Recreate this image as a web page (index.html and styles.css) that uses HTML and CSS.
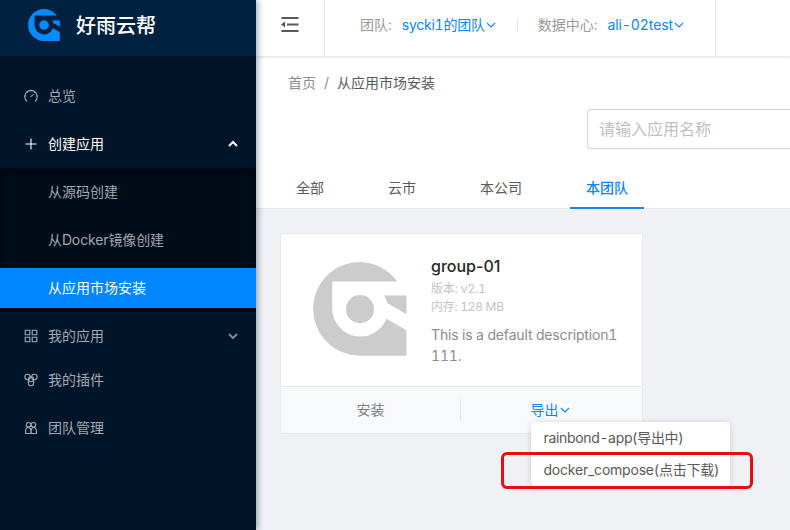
FILE: index.html
```
<!DOCTYPE html>
<html lang="zh-CN">
<head>
<meta charset="utf-8">
<title>从应用市场安装</title>
<link rel="stylesheet" href="styles.css">
</head>
<body>
<svg class="defs" width="0" height="0">
  <symbol id="logo" viewBox="130 110 280 281">
    <path d="M381 168A140 140 0 0 0 270 110A140 140 0 0 0 270 390H409V314L349 280A84 84 0 0 1 187 250V168ZM342 210H409V266L352 233Q349 221 342 210Z"/>
    <circle cx="270" cy="251" r="42"/>
  </symbol>
  <symbol id="chevron" viewBox="0 0 10 10"><path d="M1 3l4 4 4-4"/></symbol>
</svg>
<div class="layout">
  <aside class="sider">
    <div class="brand"><svg class="brand-logo"><use href="#logo"/></svg><h1>好雨云帮</h1></div>
    <nav class="menu">
      <a class="item">
        <svg class="icon" viewBox="0 0 14 14"><path d="M3 12.5A6.3 6.3 0 1 1 11 12.5M6.6 7.8L9.4 5.4M7 1v1.5M1 7h1.4M11.6 7H13M2.8 2.9l1 1M11.2 2.9l-1 1"/></svg>
        <span>总览</span></a>
      <a class="item open">
        <svg class="icon" viewBox="0 0 14 14"><path d="M7 1.5v11M1.5 7h11"/></svg>
        <span>创建应用</span><svg class="arrow up"><use href="#chevron"/></svg></a>
      <div class="submenu">
        <a class="item">从源码创建</a>
        <a class="item docker">从Docker镜像创建</a>
        <a class="item selected">从应用市场安装</a>
      </div>
      <a class="item">
        <svg class="icon" viewBox="0 0 14 14"><path d="M1.2 1.2h4.6v4.6H1.2zM8.2 1.2h4.6v4.6H8.2zM1.2 8.2h4.6v4.6H1.2zM8.2 8.2h4.6v4.6H8.2z"/></svg>
        <span>我的应用</span><svg class="arrow"><use href="#chevron"/></svg></a>
      <a class="item tight">
        <svg class="icon" viewBox="0 0 14 14"><circle cx="3.6" cy="4" r="2.7"/><circle cx="10.4" cy="4" r="2.7"/><circle cx="7" cy="6.3" r="2.5"/><path d="M4.4 6.5v3.7a2.6 2.6 0 0 0 5.2 0V6.5"/></svg>
        <span>我的插件</span></a>
      <a class="item">
        <svg class="icon" viewBox="0 0 14 14"><circle cx="4.6" cy="3.8" r="2.3"/><circle cx="9.4" cy="3.8" r="2.3"/><path d="M4.3 6.2C2.2 6.7 1.5 8.5 1.5 10v2.5h5.3V9.8C6.8 8 6 6.6 4.3 6.2M9.5 6.2c2.1.5 3 2.3 3 3.8v2.5H7.2V9.8C7.2 8 8 6.6 9.5 6.2"/></svg>
        <span>团队管理</span></a>
    </nav>
  </aside>
  <main class="main">
    <header class="topbar">
      <div class="trigger"><svg width="20" height="18" viewBox="0 0 20 18"><path d="M1.500 2h17M7 8.500h11.500M1.500 15h17" fill="none" stroke="currentColor" stroke-width="1.800"/><path d="M1 8.500L5 5.500v6z" fill="currentColor"/></svg></div>
      <div class="selectors">
        <span class="label">团队:</span><a class="link team">sycki1的团队<svg class="down"><use href="#chevron"/></svg></a>
        <i class="sep"></i>
        <span class="label">数据中心:</span><a class="link center">ali-02test<svg class="down"><use href="#chevron"/></svg></a>
      </div>
    </header>
    <section class="page-head">
      <div class="crumbs"><span>首页</span><i>/</i><b>从应用市场安装</b></div>
      <div class="search">请输入应用名称</div>
      <div class="tabs"><a>全部</a><a>云市</a><a>本公司</a><a class="active">本团队</a></div>
    </section>
    <section class="content">
      <article class="card">
        <div class="card-body">
          <svg class="card-logo"><use href="#logo"/></svg>
          <div class="meta">
            <h2>group-01</h2>
            <p class="small">版本: v2.1</p>
            <p class="small">内存: 128 MB</p>
            <p class="desc">This is a default description1<br>111.</p>
          </div>
        </div>
        <div class="actions">
          <a>安装</a>
          <a class="link export">导出<svg class="down"><use href="#chevron"/></svg></a>
        </div>
        <div class="dropdown"><a class="pending">rainbond-app(导出中)</a><a>docker_compose(点击下载)</a></div>
        <div class="highlight"></div>
      </article>
    </section>
  </main>
</div>
</body>
</html>
```
FILE: styles.css
```
* { box-sizing: border-box; }
body { margin: 0; font: 14px/22px Inter, "Noto Sans CJK SC", sans-serif; font-variant-numeric: tabular-nums; color: #595959; }
h1, h2, p { margin: 0; }
i, b { font-style: normal; font-weight: 400; }
.defs { position: absolute; }
.layout { display: flex; width: 790px; height: 530px; }

.sider { width: 256px; flex: none; background: #001529; color: #a1a9b2; box-shadow: 2px 0 6px rgba(0, 21, 41, .35); z-index: 2; }
.brand { height: 56px; background: #002140; display: flex; align-items: center; padding: 0 0 6px 28px; }
.brand-logo { width: 32px; height: 32px; fill: #0a8aff; }
.brand h1 { margin-left: 16px; padding-top: 2px; color: #fff; font-size: 20px; line-height: 32px; font-weight: 500; }
.menu { padding-top: 16px; display: flex; flex-direction: column; }
.item { height: 40px; margin: 4px 0; padding: 0 18px 0 24px; display: flex; align-items: center; }
.item.open { color: #fff; }
.icon { width: 14px; height: 14px; margin-right: 10px; fill: none; stroke: currentColor; stroke-width: 1.1; }
.arrow { width: 10px; height: 10px; margin-left: auto; fill: none; stroke: currentColor; stroke-width: 2; }
.arrow:not(.up) { color: #7d8894; }
.arrow.up { transform: rotate(180deg); }
.submenu { background: #000c17; padding: 4px 0; display: flex; flex-direction: column; gap: 8px; box-shadow: inset 0 2px 8px rgba(0, 0, 0, .45); }
.submenu .item { margin: 0; padding-left: 48px; }
.submenu .docker { letter-spacing: -.12px; }
.submenu .selected { background: #0086ff; color: #fff; }
.item.tight { margin-top: 0; }

.main { flex: 1; min-width: 0; background: #eff1f5; display: flex; flex-direction: column; }
.topbar { height: 56px; flex: none; background: #fff; display: flex; box-shadow: 0 1px 3px rgba(0, 21, 41, .14); z-index: 1; }
.trigger { width: 69px; padding: 16px 0 0 24px; border-right: 1px solid #e4e6e8; }
.selectors { width: 391px; padding: 0 0 6px 35px; border-right: 1px solid #e4e6e8; display: flex; align-items: center; white-space: nowrap; }
.label { color: #999; }
.link { color: #0b86f5; }
.team, .center { margin-left: 10px; letter-spacing: -.1px; }
.team { letter-spacing: -.24px; }
.down { width: 10px; height: 10px; margin-left: 1px; fill: none; stroke: currentColor; stroke-width: 1.1; }
.sep { width: 1px; height: 13px; margin: 0 20px 0 21px; background: #e4e4e4; }

.page-head { height: 153px; flex: none; background: #fff; border-bottom: 1px solid #e3e5e9; display: flex; flex-direction: column; }
.crumbs { padding: 16px 0 0 32px; color: #8c8c8c; }
.crumbs i { margin: 0 8px; }
.crumbs b { color: #595959; }
.search { height: 40px; margin: 15px 0 0 331px; padding: 0 11px; flex: none; border: 1px solid #d3d6d9; border-right: 0; border-radius: 4px 0 0 4px; font-size: 16px; line-height: 39px; color: #bfbfbf; }
.tabs { display: flex; gap: 32px; margin: 17px 0 0 24px; }
.tabs a { height: 43px; flex: none; padding: 11px 16px 0; }
.tabs .active { color: #0b86f5; font-weight: 500; border-bottom: 2px solid #1f86dd; }

.content { padding: 24px; }
.card { position: relative; width: 363px; height: 201px; background: #fff; border: 1px solid #e6e8eb; border-radius: 2px; }
.card-body { height: 152px; display: flex; padding: 21px 0 0 32px; }
.card-logo { width: 94px; height: 94px; margin-top: 7px; fill: #ccc; }
.meta { margin-left: 24px; color: #8c8c8c; white-space: nowrap; }
.meta h2 { font-size: 16px; line-height: 22px; font-weight: 500; color: #262626; font-variant-numeric: normal; }
.small { font-size: 12px; line-height: 18px; color: #c4c4c4; letter-spacing: -.3px; }
.small:nth-child(2) { margin-top: 3px; letter-spacing: -.15px; }
.desc { margin-top: 8px; line-height: 21px; letter-spacing: -.16px; }
.actions { height: 47px; background: #f8f9fb; border-top: 1px solid #e6e8eb; display: flex; align-items: center; color: #7c7f83; }
.actions a { width: 179px; display: flex; align-items: center; justify-content: center; }
.actions .export { border-left: 1px solid #e6e8eb; color: #0b86f5; }
.dropdown { position: absolute; left: 250px; top: 188px; width: 199px; height: 64px; background: #fff; border-radius: 4px; box-shadow: 0 1px 6px rgba(0, 0, 0, .16); white-space: nowrap; letter-spacing: -.22px; }
.dropdown a { display: block; height: 32px; padding: 5px 0 0 12.5px; }
.dropdown .pending { letter-spacing: -.34px; }
.highlight { position: absolute; left: 220px; top: 218px; width: 252px; height: 37px; border: 3px solid #e31013; border-radius: 6px; }
```
